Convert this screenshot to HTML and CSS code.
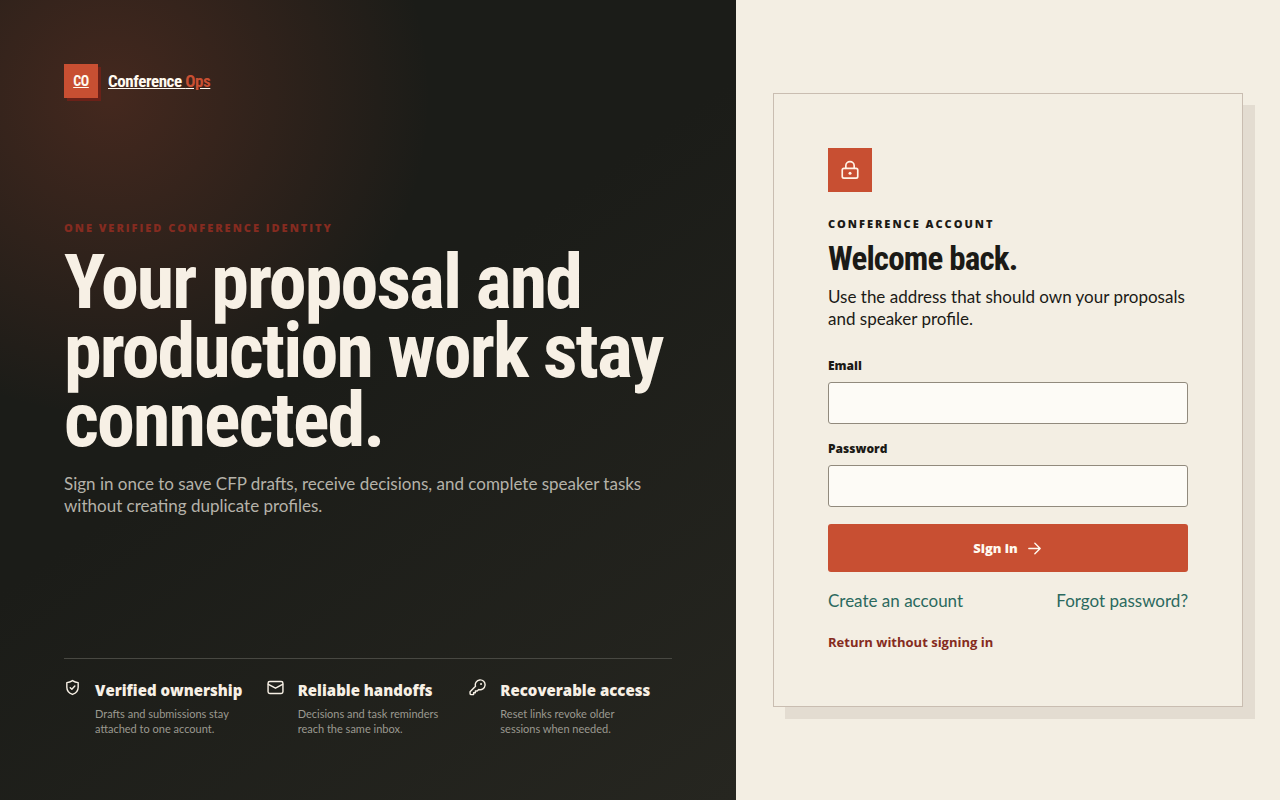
FILE: index.html
```html
<!DOCTYPE html>
<html lang="en">
<head>
<meta charset="utf-8">
<meta name="viewport" content="width=device-width, initial-scale=1">
<title>Sign in · Conference Ops</title>
<link rel="stylesheet" href="styles.css">
</head>
<body>
<div class="auth">
  <section class="story">
    <a class="brand" href="#"><span class="brand-mark">CO</span><span class="brand-name">Conference <em>Ops</em></span></a>
    <div class="story-copy">
      <p class="eyebrow eyebrow-accent">One verified conference identity</p>
      <h1>Your proposal and production work stay connected.</h1>
      <p class="lede">Sign in once to save CFP drafts, receive decisions, and complete speaker tasks without creating duplicate profiles.</p>
    </div>
    <ul class="features">
      <li>
        <svg class="icon" viewBox="0 0 24 24" aria-hidden="true"><path d="M12 2.2c2.4 1.7 5 2.7 8 2.9v6.4c0 5-3.200 8.500-8 10.300-4.800-1.800-8-5.300-8-10.300V5.100c3-.2 5.600-1.200 8-2.900z"/><path d="m8.800 12.200 2.300 2.200 4.200-4.400"/></svg>
        <div><strong>Verified ownership</strong><p>Drafts and submissions stay attached to one account.</p></div>
      </li>
      <li>
        <svg class="icon" viewBox="0 0 24 24" aria-hidden="true"><rect x="1.500" y="3.500" width="21" height="17" rx="2.500"/><path d="m2 7.500 10 5.500 10-5.500"/></svg>
        <div><strong>Reliable handoffs</strong><p>Decisions and task reminders reach the same inbox.</p></div>
      </li>
      <li>
        <svg class="icon" viewBox="0 0 24 24" aria-hidden="true"><path d="M9.200 10.200A6.900 6.900 0 1 1 13.800 14.800L11.500 17H9v2.500H6.500V22H3.200A1.700 1.700 0 0 1 1.500 20.300V17.900z"/><circle class="dot" cx="17" cy="7" r="1.400"/></svg>
        <div><strong>Recoverable access</strong><p>Reset links revoke older sessions when needed.</p></div>
      </li>
    </ul>
  </section>
  <main class="panel">
    <div class="card">
      <span class="badge"><svg class="icon icon-lock" viewBox="0 0 24 24" aria-hidden="true"><rect x="2.700" y="10" width="18.600" height="11.800" rx="2"/><path d="M7 10V7a5 5 0 0 1 10 0v3"/><circle class="dot" cx="12" cy="16" r="1.800"/></svg></span>
      <p class="eyebrow">Conference account</p>
      <h2>Welcome back.</h2>
      <p class="intro">Use the address that should own your proposals and speaker profile.</p>
      <form>
        <label for="email">Email</label>
        <input id="email" type="email" autocomplete="email">
        <label for="password">Password</label>
        <input id="password" type="password" autocomplete="current-password">
        <button type="submit">Sign in <svg class="icon" viewBox="0 0 24 24" aria-hidden="true"><path d="M4 12h16M12.500 4.500 20 12l-7.500 7.500"/></svg></button>
      </form>
      <nav class="links"><a href="#">Create an account</a><a href="#">Forgot password?</a></nav>
      <a class="return" href="#">Return without signing in</a>
    </div>
  </main>
</div>
</body>
</html>
```
FILE: styles.css
```css
* { box-sizing: border-box; }

:root {
  --ink: #1b1a16;
  --paper: #f3eee3;
  --accent: #c84f32;
  --rust: #852b20;
  --body: Lato, "Open Sans", sans-serif;
  --heavy: "Open Sans", Lato, sans-serif;
  --display: "Arial Narrow", "Roboto Condensed", Roboto, sans-serif;
}

body {
  margin: 0;
  background: var(--paper);
  color: var(--ink);
  font: 17px/22px var(--body);
}

h1, h2, p, ul { margin: 0; padding: 0; }

a { color: #2b695e; text-decoration: none; }

.auth {
  display: grid;
  grid-template-columns: 1.15fr 0.85fr;
  min-height: 100vh;
}

.icon {
  flex: none;
  width: 17px;
  height: 17px;
  fill: none;
  stroke: currentColor;
  stroke-width: 2;
  stroke-linecap: round;
  stroke-linejoin: round;
}
.dot { fill: currentColor; stroke: none; }

.story {
  display: flex;
  flex-direction: column;
  justify-content: space-between;
  padding: 64px;
  color: #f7f0e5;
  background:
    radial-gradient(circle at 15% 12%, rgba(200, 79, 50, 0.24), transparent 34%),
    linear-gradient(145deg, #1b1c18 45%, #262620);
}

.brand {
  display: flex;
  align-items: center;
  gap: 10px;
  color: #fffaf0;
  font: bold 17px/20px var(--display);
  letter-spacing: -0.025em;
}
.brand-mark {
  display: grid;
  place-items: center;
  width: 34px;
  height: 34px;
  background: var(--accent);
  box-shadow: 3px 3px 0 #6b2118;
  font-size: 14px;
  text-decoration: underline;
}
.brand-name { text-decoration: underline; }
.brand-name em { color: var(--accent); font-style: normal; }

.story-copy { padding-bottom: 20px; }

.eyebrow {
  font-family: var(--heavy);
  font-size: 11px;
  line-height: 16px;
  font-weight: 800;
  letter-spacing: 0.18em;
  text-transform: uppercase;
}
.eyebrow-accent { color: var(--rust); }

h1, h2 {
  font-family: var(--display);
  font-weight: bold;
  letter-spacing: -0.025em;
}
h1 {
  margin: 12px 0 18px;
  font-size: 76px;
  line-height: 69px;
}
.lede { color: #b5b2a9; }

.features {
  display: grid;
  grid-template-columns: repeat(3, 1fr);
  padding-top: 20px;
  border-top: 1px solid #484842;
  list-style: none;
}
.features li { display: flex; gap: 14px; }
.features strong {
  display: block;
  font: 800 15px/22px var(--heavy);
}
.features p {
  max-width: 150px;
  margin-top: 5px;
  color: #9b9990;
  font-size: 11px;
  line-height: 15px;
}

.panel {
  display: grid;
  place-items: center;
  padding: 24px;
}
.card {
  width: 100%;
  max-width: 470px;
  padding: 54px;
  border: 1px solid #c9bdb1;
  background: var(--paper);
  box-shadow: 12px 12px 0 #e3dcd1;
}
.badge {
  display: grid;
  place-items: center;
  width: 44px;
  height: 44px;
  margin-bottom: 24px;
  background: var(--accent);
  color: #fff3e6;
}
.icon-lock { width: 20px; height: 20px; }

h2 {
  margin: 8px 0;
  font-size: 33px;
  line-height: 38px;
}

form { display: flex; flex-direction: column; }
label {
  margin-top: 26px;
  font: 800 12px/20px var(--heavy);
}
input {
  height: 42px;
  margin-top: 6px;
  padding: 0 12px;
  border: 1px solid #918a7d;
  border-radius: 3px;
  background: #fdfbf6;
  font: inherit;
}
input + label { margin-top: 15px; }
button {
  display: flex;
  align-items: center;
  justify-content: center;
  gap: 8px;
  height: 48px;
  margin-top: 17px;
  border: 0;
  border-radius: 3px;
  background: var(--accent);
  color: #fffaf0;
  font: 800 13px/20px var(--heavy);
}

.links {
  display: flex;
  justify-content: space-between;
  margin-top: 18px;
}
.return {
  display: block;
  margin-top: 20px;
  color: var(--rust);
  font: bold 13px/20px var(--heavy);
}
```
